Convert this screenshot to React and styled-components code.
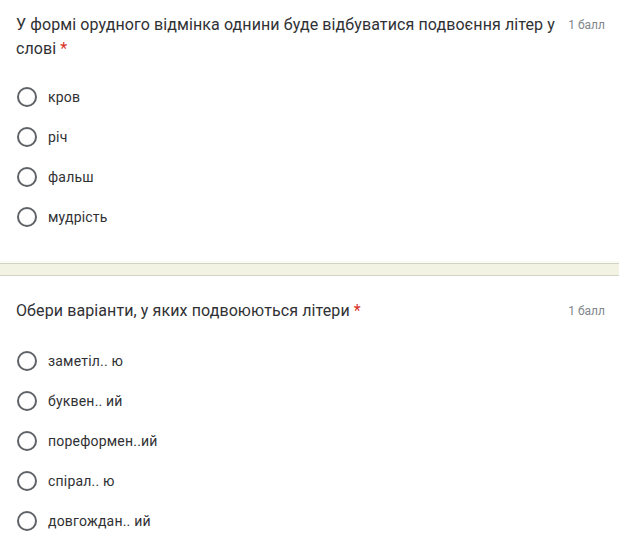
import styled, { createGlobalStyle } from "styled-components";

const GlobalStyle = createGlobalStyle`
  body {
    margin: 0;
    background: #ffffff;
    font-family: Roboto, "Noto Sans", Arial, sans-serif;
  }
`;

const Page = styled.div`
  width: 619px;
  display: flex;
  flex-direction: column;
`;

const Card = styled.section`
  padding: ${({ $top }) => $top}px 14px ${({ $bottom }) => $bottom}px 16px;
  background: #fff;
`;

const Header = styled.div`
  display: flex;
  align-items: flex-start;
  justify-content: space-between;
  gap: 12px;
`;

const Title = styled.div`
  font-size: 16px;
  line-height: 24px;
  color: #303134;
  letter-spacing: 0.1px;
`;

const Required = styled.span`
  display: inline-block;
  color: #d93025;
  margin-left: 4px;
`;

const Points = styled.div`
  flex-shrink: 0;
  font-size: 12px;
  line-height: 24px;
  color: #80868b;
  white-space: nowrap;
`;

const Options = styled.div`
  display: flex;
  flex-direction: column;
  margin-top: ${({ $gap }) => $gap}px;
`;

const Option = styled.label`
  display: flex;
  align-items: center;
  height: 40px;
  gap: 11px;
  font-size: 14px;
  color: #303134;
  letter-spacing: 0.2px;
`;

const Radio = styled.span`
  width: 16px;
  height: 16px;
  margin-left: 1px;
  border: 2px solid #5f6368;
  border-radius: 50%;
  flex-shrink: 0;
`;

const Divider = styled.div`
  height: 11px;
  background: #f3f3e3;
  border-top: 1px solid #d3d3c6;
  border-bottom: 1px solid #d3d3c6;
  box-shadow: 0 -2px 0 #fafaf5, 0 2px 0 #fafaf5;
`;

const questions = [
  {
    title: "У формі орудного відмінка однини буде відбуватися подвоєння літер у слові",
    options: ["кров", "річ", "фальш", "мудрість"],
    top: 13,
    gap: 16,
    bottom: 26,
  },
  {
    title: "Обери варіанти, у яких подвоюються літери",
    options: ["заметіл.. ю", "буквен.. ий", "пореформен..ий", "спірал.. ю", "довгождан.. ий"],
    top: 23,
    gap: 18,
    bottom: 12,
  },
];

export default function App() {
  return (
    <>
      <GlobalStyle />
      <Page>
        {questions.map((q, i) => (
          <div key={i}>
            {i > 0 && <Divider />}
            <Card $top={q.top} $bottom={q.bottom}>
              <Header>
                <Title>
                  {q.title}
                  <Required>*</Required>
                </Title>
                <Points>1 балл</Points>
              </Header>
              <Options $gap={q.gap}>
                {q.options.map((o) => (
                  <Option key={o}>
                    <Radio />
                    {o}
                  </Option>
                ))}
              </Options>
            </Card>
          </div>
        ))}
      </Page>
    </>
  );
}
